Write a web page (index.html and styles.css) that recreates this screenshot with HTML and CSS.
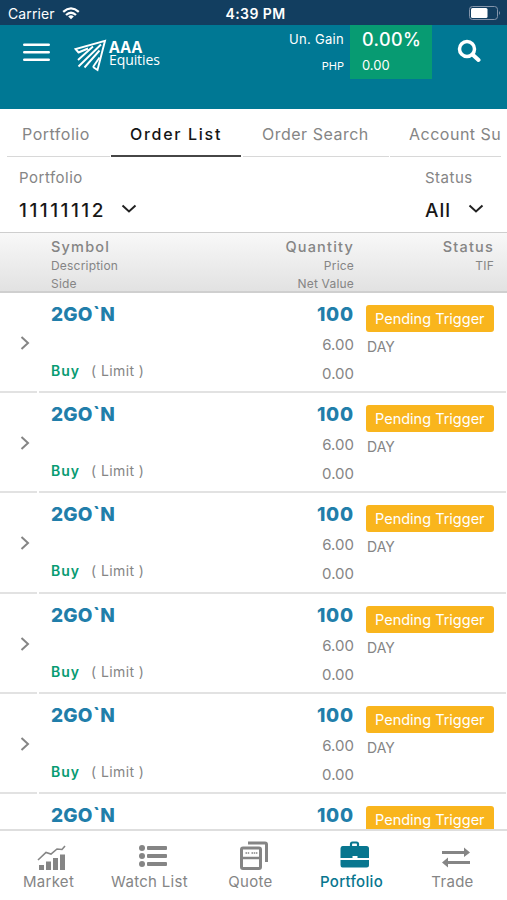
FILE: index.html
```html
<!DOCTYPE html>
<html lang="en">
<head>
    <meta charset="UTF-8">
    <meta name="viewport" content="width=device-width, initial-scale=1.0">
    <title>Order List</title>
    <link rel="stylesheet" href="styles.css">
</head>
<body>
    <div class="app">
        <div class="status-bar">
            <div class="carrier">
                <span>Carrier</span>
                <svg width="18" height="13" viewBox="0 0 18 13" fill="none" stroke="#fff" stroke-width="2.3">
                    <path d="M1.2 4.8Q9-2 16.800 4.800M4 8Q9 3.600 14 8"/>
                    <path d="M9 12.300L6.200 9.500Q9 7.200 11.800 9.500Z" fill="#fff" stroke="none"/>
                </svg>
            </div>
            <span class="clock">4:39 PM</span>
            <svg class="battery" width="32" height="14" viewBox="0 0 32 14">
                <rect x=".5" y=".5" width="28" height="13" rx="3" fill="none" stroke="#8495ab"/>
                <rect x="2" y="2" width="16.500" height="10" rx="1.500" fill="#fff"/>
                <path d="M30 5q2 2 0 4z" fill="#8495ab"/>
            </svg>
        </div>

        <header class="header">
            <svg class="menu-icon" width="27" height="19" viewBox="0 0 27 19" stroke="#fff" stroke-width="2.600" stroke-linecap="round">
                <path d="M1.300 1.800h24.400M1.300 9.300h24.400M1.300 16.800h24.400"/>
            </svg>
            <div class="logo">
                <svg width="33" height="33" viewBox="0 0 33 33" fill="none" stroke="#fff" stroke-width="1.900">
                    <path d="M5 14L1.500 10L31 1.800L23.500 31L19 28"/>
                    <path d="M4.500 13.500L14 9.500M4 21L19 7.500M4.500 27.500L27 5.500M10.500 28.500L25.500 11.500M19 28L25.500 18.500"/>
                </svg>
                <div class="logo-text"><b>AAA</b><span>Equities</span></div>
            </div>
            <div class="gain-label"><span>Un. Gain</span><small>PHP</small></div>
            <div class="gain-box"><span>0.00%</span><small>0.00</small></div>
            <svg class="search-icon" width="24" height="24" viewBox="0 0 24 24" fill="none" stroke="#fff" stroke-width="3.500">
                <circle cx="10" cy="10" r="7.500"/>
                <path d="M15.500 15.500l6 5.500" stroke-width="4" stroke-linecap="round"/>
            </svg>
        </header>

        <nav class="tabs">
            <span class="tab">Portfolio</span>
            <span class="tab active">Order List</span>
            <span class="tab">Order Search</span>
            <span class="tab">Account Su</span>
        </nav>

        <div class="filters">
            <div class="filter">
                <label>Portfolio</label>
                <div class="select account">
                    <span>11111112</span>
                    <svg width="16" height="10" viewBox="0 0 16 10" fill="none" stroke="#222" stroke-width="2"><path d="M1.500 1.500L8 7.500L14.500 1.500"/></svg>
                </div>
            </div>
            <div class="filter">
                <label>Status</label>
                <div class="select">
                    <span>All</span>
                    <svg width="16" height="10" viewBox="0 0 16 10" fill="none" stroke="#222" stroke-width="2"><path d="M1.500 1.500L8 7.500L14.500 1.500"/></svg>
                </div>
            </div>
        </div>

        <div class="table-head">
            <div class="head-left"><b>Symbol</b><span>Description</span><span>Side</span></div>
            <div class="head-right"><b>Quantity</b><span>Price</span><span>Net Value</span></div>
            <div class="head-right"><b>Status</b><span>TIF</span></div>
        </div>

        <main class="orders" id="orders"></main>

        <nav class="bottom-nav">
            <div class="nav-item">
                <svg width="30" height="28" viewBox="0 0 30 28" fill="#858585">
                    <path d="M2 21h5v5H2zM9 17.500h5V26H9zM16 14h5v12h-5zM23 10.500h5V26h-5z"/>
                    <path d="M1 16L9 8.500L14 10L20 5L25 5.500L28 2" fill="none" stroke="#858585" stroke-width="1.600"/>
                </svg>
                <span>Market</span>
            </div>
            <div class="nav-item">
                <svg width="30" height="28" viewBox="0 0 30 28" fill="#858585">
                    <circle cx="4" cy="4" r="3"/><circle cx="4" cy="12" r="3"/><circle cx="4" cy="20" r="3"/>
                    <rect x="9" y="2" width="20" height="4" rx="1"/><rect x="9" y="10" width="20" height="4" rx="1"/><rect x="9" y="18" width="20" height="4" rx="1"/>
                </svg>
                <span>Watch List</span>
            </div>
            <div class="nav-item">
                <svg class="tall" width="32" height="30" viewBox="0 0 32 30" fill="none" stroke="#858585" stroke-width="3">
                    <path d="M10 2H27Q28.500 2 28.500 3.500V21"/>
                    <rect x="3.500" y="7" width="19" height="20.500" rx="1.500"/>
                    <path d="M3.500 17h19" stroke-width="2.500"/>
                    <path d="M7.500 12h4M13.500 12h6" stroke-width="1.500" stroke-dasharray="1.500 .7"/>
                </svg>
                <span>Quote</span>
            </div>
            <div class="nav-item current">
                <svg class="tall" width="30" height="30" viewBox="0 0 30 30" fill="#08768f">
                    <path d="M11 6V3Q11 1.500 12.500 1.500h4Q18 1.500 18 3v3" fill="none" stroke="#08768f" stroke-width="2.200"/>
                    <path d="M2.500 5h24Q29 5 29 7.500V17H17.500v-2h-5v2H.5V7.500Q.5 5 2.500 5z"/>
                    <path d="M.5 19h28.500v5Q29 26.500 26.500 26.500h-24Q.5 26.500 .5 24z"/>
                </svg>
                <span>Portfolio</span>
            </div>
            <div class="nav-item">
                <svg width="30" height="28" viewBox="0 0 30 28" fill="#858585">
                    <path d="M1 7H23V3.500L29 8.500L23 13V10H1zM29 17H7V13.500L1 18.500L7 23.500V20H29z"/>
                </svg>
                <span>Trade</span>
            </div>
        </nav>
    </div>

    <script>
        const orders = Array(6).fill({
            symbol: "2GO`N", side: "Buy", type: "( Limit )",
            quantity: "100", price: "6.00", net: "0.00",
            status: "Pending Trigger", tif: "DAY"
        });

        document.getElementById("orders").innerHTML = orders.map(order => `
            <div class="order">
                <div class="expand">
                    <svg width="10" height="16" viewBox="0 0 10 16" fill="none" stroke="#858585" stroke-width="2"><path d="M1.500 2L8 8L1.500 14"/></svg>
                </div>
                <div class="order-body">
                    <div class="order-name">
                        <b>${order.symbol}</b>
                        <p><strong>${order.side}</strong><span>${order.type}</span></p>
                    </div>
                    <div class="order-values">
                        <b>${order.quantity}</b>
                        <span>${order.price}</span>
                        <span>${order.net}</span>
                    </div>
                    <div class="order-status">
                        <span class="badge">${order.status}</span>
                        <span class="tif">${order.tif}</span>
                    </div>
                </div>
            </div>`).join("");
    </script>
</body>
</html>
```
FILE: styles.css
```css
* {
    box-sizing: border-box;
}

body {
    margin: 0;
    font-family: Inter, Roboto, sans-serif;
    color: #858585;
    background: #fff;
}

svg {
    display: block;
    flex-shrink: 0;
}

.app {
    width: 507px;
    height: 900px;
    display: flex;
    flex-direction: column;
    overflow: hidden;
}

.status-bar {
    height: 25px;
    flex-shrink: 0;
    padding: 1px 6px 0 8px;
    display: grid;
    grid-template-columns: 1fr auto 1fr;
    align-items: center;
    background: #123e60;
    color: #fff;
    font-size: 14px;
}

.carrier {
    display: flex;
    align-items: center;
    gap: 7px;
    letter-spacing: 0.1px;
}

.clock {
    font-weight: 600;
    letter-spacing: 0.4px;
    padding-left: 2px;
}

.battery {
    justify-self: end;
}

.header {
    height: 84px;
    flex-shrink: 0;
    display: flex;
    align-items: flex-start;
    padding-left: 23px;
    background: #007894;
    color: #fff;
}

.menu-icon {
    margin-top: 18px;
}

.logo {
    display: flex;
    margin: 14px 0 0 24px;
    gap: 2px;
}

.logo-text {
    display: flex;
    flex-direction: column;
    width: 62px;
    padding-top: 2px;
    font-family: "Open Sans", sans-serif;
    font-size: 14px;
    line-height: 13px;
    letter-spacing: -0.1px;
    white-space: nowrap;
}

.logo-text b {
    font-size: 15.500px;
    font-weight: 700;
    line-height: 12px;
    letter-spacing: 0.5px;
}

.gain-label {
    margin-left: auto;
    width: 80px;
    display: flex;
    flex-direction: column;
    align-items: flex-end;
    padding: 5px 6px 0 0;
    font-size: 13px;
    line-height: 18px;
    letter-spacing: 0.3px;
}

.gain-label small {
    margin-top: 9px;
    font-size: 11px;
    letter-spacing: 0;
}

.gain-box {
    width: 82px;
    height: 54px;
    padding: 3px 0 0 12px;
    display: flex;
    flex-direction: column;
    background: #079b72;
    font-size: 18px;
    font-weight: 500;
    line-height: 24px;
    letter-spacing: 0.4px;
}

.gain-box small {
    margin-top: 1px;
    font-size: 13px;
    font-weight: 400;
    letter-spacing: 0;
}

.search-icon {
    margin: 14px 26px 0 25px;
}

.tabs {
    height: 49px;
    flex-shrink: 0;
    margin: 0 6px 0 7px;
    display: flex;
    gap: 1px;
    overflow: hidden;
    font-size: 16px;
    letter-spacing: 0.5px;
    white-space: nowrap;
}

.tab {
    flex-shrink: 0;
    width: 103px;
    height: 48px;
    padding: 15px 0 0 15px;
    line-height: 20px;
    border-bottom: 1px solid #d8d8d8;
}

.tab:nth-child(3) {
    width: 146px;
    padding-left: 19px;
}

.tab:nth-child(4) {
    width: 112px;
    padding-left: 19px;
}

.tab.active {
    width: 130px;
    padding-left: 19px;
    margin-right: 1px;
    color: #151515;
    font-weight: 500;
    letter-spacing: 1.7px;
    border-bottom: 2px solid #464646;
}

.filters {
    height: 74px;
    flex-shrink: 0;
    display: flex;
    justify-content: space-between;
    padding: 10px 23px 0 19px;
}

.filter label {
    display: block;
    font-size: 15px;
    line-height: 20px;
    letter-spacing: 0.5px;
}

.select {
    display: flex;
    align-items: center;
    gap: 17px;
    margin-top: 11px;
    color: #171717;
    font-size: 19px;
    font-weight: 500;
    line-height: 24px;
    letter-spacing: 1px;
}

.select svg {
    margin-bottom: 4px;
}

.account {
    gap: 15px;
    letter-spacing: 2.500px;
}

.table-head {
    height: 61px;
    flex-shrink: 0;
    display: grid;
    grid-template-columns: 153px 150px 140px;
    padding: 4px 0 0 51px;
    border-top: 1px solid #cecece;
    border-bottom: 2px solid #cfcfcf;
    background: linear-gradient(#f8f8f8, #e2e2e2);
}

.table-head div {
    display: flex;
    flex-direction: column;
    font-size: 12px;
    line-height: 18px;
    letter-spacing: 0.2px;
}

.table-head .head-right {
    align-items: flex-end;
}

.table-head b {
    font-size: 14.500px;
    font-weight: 500;
    line-height: 20px;
    letter-spacing: 1.2px;
}

.orders {
    height: 536px;
    flex-shrink: 0;
    overflow: hidden;
}

.order {
    height: 100.200px;
    display: flex;
    gap: 2px;
}

.expand {
    width: 37px;
    padding: 42px 0 0 20px;
    border-bottom: 2px solid #e2e2e2;
}

.order-body {
    width: 467px;
    display: grid;
    grid-template-columns: 152px 151px 140px;
    padding-left: 12px;
    border-bottom: 2px solid #e2e2e2;
}

.order b {
    display: block;
    color: #217eaa;
    font-size: 19px;
    font-weight: 800;
    line-height: 24px;
    letter-spacing: 0.2px;
}

.order-name {
    padding-top: 10px;
}

.order-name p {
    display: flex;
    gap: 11px;
    margin: 34px 0 0;
    font-size: 14px;
    line-height: 20px;
    letter-spacing: 0.4px;
}

.order-name strong {
    color: #079b72;
    font-weight: 600;
    letter-spacing: 1px;
}

.order-values {
    display: flex;
    flex-direction: column;
    align-items: flex-end;
    padding-top: 10px;
    font-size: 15px;
    line-height: 29px;
    letter-spacing: 0;
}

.order-values b {
    margin-bottom: 3px;
    letter-spacing: 0.8px;
}

.order-status {
    padding: 12px 0 0 12px;
}

.badge {
    display: block;
    width: 128px;
    height: 27px;
    padding-left: 9px;
    border-radius: 3px;
    background: #f9b51d;
    color: #fff;
    font-size: 14.500px;
    line-height: 27px;
    letter-spacing: 0;
    white-space: nowrap;
}

.tif {
    display: block;
    margin: 4px 0 0 1px;
    font-size: 14px;
    line-height: 21px;
}

.bottom-nav {
    height: 71px;
    flex-shrink: 0;
    display: grid;
    grid-template-columns: repeat(5, 101px);
    border-top: 2px solid #dedede;
}

.nav-item {
    display: flex;
    flex-direction: column;
    align-items: center;
    justify-content: flex-end;
    padding: 0 4px 8px 0;
    font-size: 15px;
    line-height: 20px;
    letter-spacing: 0.3px;
    white-space: nowrap;
}

.nav-item svg {
    margin-left: 6px;
}

.nav-item .tall {
    margin-bottom: 1px;
}

.current {
    color: #08768f;
    font-weight: 500;
}
```
